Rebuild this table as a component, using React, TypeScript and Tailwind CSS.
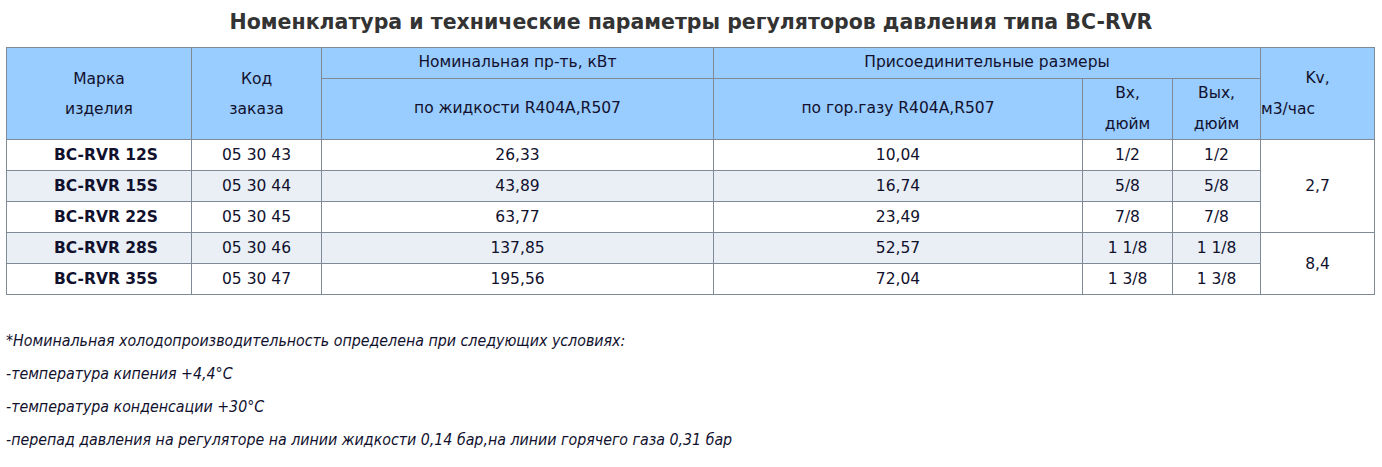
const rows = [
  { mark: 'BC-RVR 12S', code: '05 30 43', liq: '26,33', gas: '10,04', inp: '1/2', out: '1/2' },
  { mark: 'BC-RVR 15S', code: '05 30 44', liq: '43,89', gas: '16,74', inp: '5/8', out: '5/8' },
  { mark: 'BC-RVR 22S', code: '05 30 45', liq: '63,77', gas: '23,49', inp: '7/8', out: '7/8' },
  { mark: 'BC-RVR 28S', code: '05 30 46', liq: '137,85', gas: '52,57', inp: '1 1/8', out: '1 1/8' },
  { mark: 'BC-RVR 35S', code: '05 30 47', liq: '195,56', gas: '72,04', inp: '1 3/8', out: '1 3/8' },
];

const th = 'border border-[#7f8a96] font-normal p-0 text-center align-middle';
const td = 'border border-[#7f8a96] p-0 text-center h-[31px] leading-[20px]';

function TwoLines({ a, b }: { a: string; b: string }) {
  return (
    <div className="h-[56px] flex flex-col justify-center leading-[31px]">
      <div>{a}</div>
      <div>{b}</div>
    </div>
  );
}

export default function App() {
  return (
    <div className="bg-white w-[1382px] h-[467px] px-[6px] pt-[6px] text-[#11112e] font-['DejaVu_Sans',sans-serif]">
      <h1 className="text-center text-[20.5px] font-bold text-[#333333] leading-[32px] mb-[9px]">
        Номенклатура и технические параметры регуляторов давления типа BC-RVR
      </h1>
      <table className="border-collapse w-[1368px] text-[15.5px] table-fixed">
        <colgroup>
          <col className="w-[185px]" />
          <col className="w-[130px]" />
          <col className="w-[392px]" />
          <col className="w-[369px]" />
          <col className="w-[90px]" />
          <col className="w-[88px]" />
          <col className="w-[114px]" />
        </colgroup>
        <thead className="bg-[#99ccff]">
          <tr className="h-[31px]">
            <th rowSpan={2} className={th + ' leading-[30px]'}>
              Марка<br />изделия
            </th>
            <th rowSpan={2} className={th + ' leading-[30px]'}>
              Код<br />заказа
            </th>
            <th className={th}>Номинальная пр-ть, кВт</th>
            <th colSpan={3} className={th}>Присоединительные размеры</th>
            <th rowSpan={2} className={th + ' leading-[31px]'}>
              <div>Kv,</div>
              <div className="text-left">м3/час</div>
            </th>
          </tr>
          <tr className="h-[61px]">
            <th className={th}>по жидкости R404A,R507</th>
            <th className={th}>по гор.газу R404A,R507</th>
            <th className={th}>
              <TwoLines a="Вх," b="дюйм" />
            </th>
            <th className={th}>
              <TwoLines a="Вых," b="дюйм" />
            </th>
          </tr>
        </thead>
        <tbody>
          {rows.map((r, i) => (
            <tr key={r.mark} className={i % 2 === 1 ? 'bg-[#e9eff5]' : 'bg-white'}>
              <td className={td + ' font-semibold pl-[14px]'}>{r.mark}</td>
              <td className={td}>{r.code}</td>
              <td className={td}>{r.liq}</td>
              <td className={td}>{r.gas}</td>
              <td className={td}>{r.inp}</td>
              <td className={td}>{r.out}</td>
              {i === 0 && (
                <td rowSpan={3} className={td + ' bg-white'}>
                  2,7
                </td>
              )}
              {i === 3 && (
                <td rowSpan={2} className={td + ' bg-white'}>
                  8,4
                </td>
              )}
            </tr>
          ))}
        </tbody>
      </table>
      <div className="mt-[29px] italic text-[15.8px] leading-[33px] font-['DejaVu_Sans_Condensed','DejaVu_Sans',sans-serif]">
        <p>*Номинальная холодопроизводительность определена при следующих условиях:</p>
        <p>-температура кипения +4,4°C</p>
        <p>-температура конденсации +30°C</p>
        <p>-перепад давления на регуляторе на линии жидкости 0,14 бар,на линии горячего газа 0,31 бар</p>
      </div>
    </div>
  );
}
